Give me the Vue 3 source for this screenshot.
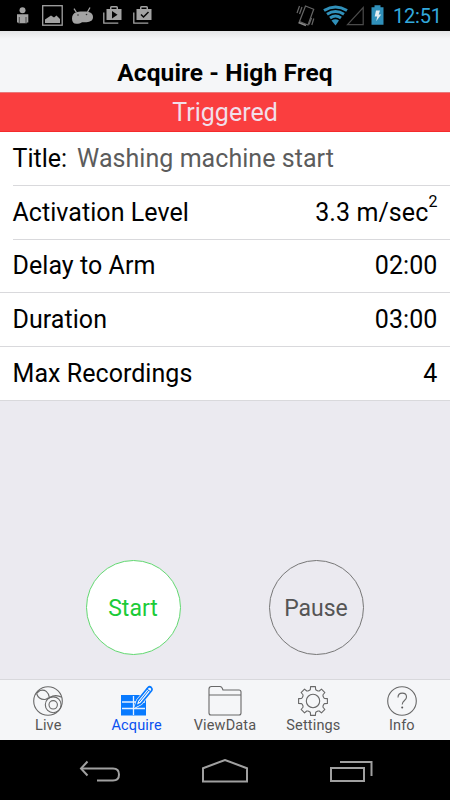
<script setup>
import { ref } from 'vue'

const rows = ref([
  { name: 'Activation Level', value: '3.3 m/sec', sup: '2', inset: true },
  { name: 'Delay to Arm', value: '02:00' },
  { name: 'Duration', value: '03:00' },
  { name: 'Max Recordings', value: '4' }
])
const tabs = ['Live', 'Acquire', 'ViewData', 'Settings', 'Info']
const active = ref('Acquire')
const title = ref('Washing machine start')

// outline of the settings gear: eight teeth around a 32x32 box
function gear() {
  const pts = []
  for (let i = 0; i < 8; i++) {
    const a = i * 45
    for (const [d, r] of [[-18, 11.2], [-13, 11.8], [-9.5, 14.6], [9.5, 14.6], [13, 11.8], [18, 11.2]]) {
      const t = (a + d) * Math.PI / 180
      pts.push((16 + r * Math.sin(t)).toFixed(2) + ' ' + (16 - r * Math.cos(t)).toFixed(2))
    }
  }
  return 'M' + pts.join('L') + 'Z'
}
</script>

<template>
  <div class="screen">
    <div class="status">
      <svg class="left" width="160" height="31" viewBox="0 0 160 31">
        <g fill="#a3a3a3">
          <circle cx="22.5" cy="10.2" r="3" />
          <path d="M17 14.200h11.300v8.300h-1.400v.8h-8.500v-.8H17z" />
          <path d="M45 19.500l6-4 3 2 2.500-2 3.500 3.500v4H45z" />
          <path d="M72 18.500c0-3 1.500-5.500 4.500-6.200 3-.8 5-.8 8-.8 5 0 8.500 1.500 8.500 5.500 0 3.500-2.500 4.500-5 5-2 .5-4 .3-6 .3-1.500 1.200-3.500 1.500-5.500 1.500-3 0-4.500-2-4.500-5.300z" />
          <path d="M76.500 12.500l-2.500-3.800M87.500 12l2.500-4.500" stroke="#a3a3a3" stroke-width="1.300" />
          <path d="M106.500 9h3.500V7.500q0-1.500 1.500-1.500h5q1.500 0 1.500 1.500V9h3.500v11h-15zM111.500 9h5V7.500h-5z" fill-rule="evenodd" />
          <path d="M136.500 9h3.500V7.500q0-1.500 1.500-1.500h5q1.500 0 1.500 1.500V9h3.500v11h-15zM141.500 9h5V7.500h-5z" fill-rule="evenodd" />
        </g>
        <path d="M19.300 17v6M26 17v6" stroke="#333" stroke-width=".8" />
        <g fill="none" stroke="#a3a3a3" stroke-width="1.300">
          <rect x="42.700" y="5.700" width="19.500" height="19.500" />
          <path d="M103.800 12.500v10.700h14.500M133.800 12.500v10.700h14.500" />
        </g>
        <circle cx="78" cy="15" r=".8" fill="#333" />
        <circle cx="86.500" cy="14.500" r=".8" fill="#333" />
        <path d="M112 11v7.500l5.500-3.700z" fill="#050505" />
        <path d="M141 14.500l2.500 2.500 5-5" fill="none" stroke="#050505" stroke-width="1.500" />
      </svg>
      <svg class="right" width="92" height="31" viewBox="295 0 92 31">
        <g fill="none" stroke="#666" stroke-width="1.200">
          <path d="M305.500 6l8.200 3.300-5.700 15.700-8.500-3.500z" />
          <path d="M299.500 6l-2.500 7M302 7l-2.500 7M311.500 18l-2.500 6.500M313.800 18.500l-2 6.500" />
          <path d="M298.500 22.500l7.500 3" stroke="#888" stroke-width="1.800" />
          <path d="M363.200 7.500v17.200h-15.700z" stroke="#4b4b4b" />
        </g>
        <g fill="none" stroke="#3090ba" stroke-width="3">
          <path d="M324 10.500q11.500-7 23 0" />
          <path d="M327 14.200q8.500-5.500 17 0" />
          <path d="M330 18q5.500-4 11 0" />
        </g>
        <path d="M331.500 20.500q4-2.500 7.500 0l-3.500 5z" fill="#3090ba" />
        <path d="M371.500 7.300h3V5.300h6v2h3v17.500h-12z" fill="#3090ba" />
        <path d="M376 10.500h4l-1.300 4h2.500l-5 6.700 1-4.700h-2.500z" fill="#e3edf2" />
      </svg>
      <span class="clock">12:51</span>
    </div>

    <div class="header"><span>Acquire - High Freq</span></div>
    <div class="banner"><span>Triggered</span></div>

    <div class="list">
      <div class="row inset">
        <div class="line">
          <span class="titlelabel">Title:</span>
          <span class="titletext">{{ title }}</span>
        </div>
      </div>
      <div class="row" v-for="row in rows" :key="row.name" :class="{ inset: row.inset }">
        <div class="line">
          <span class="name">{{ row.name }}</span>
          <span class="value">{{ row.value }}<sup v-if="row.sup">{{ row.sup }}</sup></span>
        </div>
      </div>
    </div>

    <div class="actions">
      <button class="round start">Start</button>
      <button class="round pause">Pause</button>
    </div>

    <div class="tabs">
      <div class="tab" v-for="tab in tabs" :key="tab" :class="{ active: tab === active }" @click="active = tab">
        <svg v-if="tab === 'Live'" width="32" height="32" viewBox="0 0 32 32">
          <circle cx="16" cy="16" r="14.300" />
          <circle cx="21.200" cy="19.800" r="7.900" />
          <circle cx="21.200" cy="19.800" r="4.200" />
          <path d="M4.500 8.500c1.500 4 5 6.500 9.500 5.800M8 5.500c5-1.500 8.500 1.500 9.500 7.300M4.500 8.500c1.500-1.500 2-2 3.500-3M14 14.300c1-1 2-1.300 3.500-1.500M17.500 12.800c4-2.800 8-2.800 12.300-.5" />
        </svg>
        <svg v-else-if="tab === 'Acquire'" width="32" height="32" viewBox="0 0 32 32">
          <rect x="0" y="10" width="25" height="20.500" fill="#087aff" stroke="none" />
          <path d="M1 17h23M1 23.500h23M12.500 11v19" stroke="#e5f0ff" stroke-width="1.300" />
          <path d="M14.500 21.500l2-6L27 2.500q1.500-1.500 3.200 0 1.500 1.500.3 3.200L20 18.500z" fill="#f5f6f8" stroke="#f5f6f8" stroke-width="3" />
          <path d="M14.500 21.300l2-5.800L27 2.500q1.500-1.500 3.200 0 1.500 1.500.3 3.200L20 18.500z" fill="#f5f6f8" stroke="#087aff" stroke-width="1.700" />
          <path d="M18.200 17L27.800 5M25.500 3.500l4 3.200" stroke="#087aff" stroke-width="1" />
        </svg>
        <svg v-else-if="tab === 'ViewData'" width="34" height="32" viewBox="0 0 34 32">
          <path d="M1 28V4q0-2.500 2.500-2.500h8.500q2 0 3 3.500h16q2 0 2 2v21q0 2-2 2H3q-2 0-2-2zM1 10h32" />
        </svg>
        <svg v-else-if="tab === 'Settings'" width="32" height="32" viewBox="0 0 32 32">
          <path :d="gear()" stroke-linejoin="round" />
          <circle cx="16" cy="16" r="6.700" />
        </svg>
        <svg v-else width="32" height="32" viewBox="0 0 32 32">
          <circle cx="16" cy="16" r="14.300" />
          <path d="M12 12.500c0-6 8.500-5.500 8.500-.5 0 3.500-4.300 3.500-4.300 7.500" />
          <circle cx="16.200" cy="22.500" r="1" fill="#555" stroke="none" />
        </svg>
        <span>{{ tab }}</span>
      </div>
    </div>

    <div class="nav">
      <svg width="42" height="24" viewBox="0 0 42 24">
        <path d="M2 9.500h32q6 0 6 6t-6 6H18" />
        <path d="M8.500 2.500l-6.500 7 6.500 7" />
      </svg>
      <svg width="46" height="26" viewBox="0 0 46 26">
        <path d="M1 9.200L23 1l22 8.200v13.300H1z" />
      </svg>
      <svg width="44" height="24" viewBox="0 0 44 24">
        <path d="M2 9h33v13H2zM11 3h31.500v14" />
      </svg>
    </div>
  </div>
</template>

<style scoped>
.screen {
  width: 450px;
  height: 800px;
  display: flex;
  flex-direction: column;
  background: #ebeaf0;
  font-family: Roboto, "Liberation Sans", sans-serif;
  color: #000;
  overflow: hidden;
}
.status {
  height: 31px;
  background: #000;
  display: flex;
  flex-shrink: 0;
}
.right {
  margin-left: 135px;
}
.clock {
  margin-left: 6px;
  line-height: 32px;
  font-size: 20px;
  letter-spacing: -0.2px;
  color: #33a9dc;
}
.header {
  height: 61px;
  background: linear-gradient(#e4e5e7, #f5f6f8 8px);
  text-align: center;
  font-size: 24.5px;
  font-weight: 700;
  letter-spacing: 0.1px;
  line-height: 84px;
}
.banner {
  box-sizing: border-box;
  height: 40px;
  background: #fa3e3f;
  border-top: 1px solid #e8797b;
  border-bottom: 1px solid #f42b2c;
  text-align: center;
  color: #f1dfe9;
  font-size: 25px;
  line-height: 39px;
}
.list {
  height: 269px;
  background: #fff;
  display: flex;
  flex-direction: column;
}
.row {
  flex: 1;
  display: flex;
  font-size: 25px;
}
.row .line {
  flex: 1;
  display: flex;
  align-items: center;
  padding: 0 12.5px;
  border-bottom: 1px solid #d9d9dc;
}
.row.inset {
  padding-left: 12.5px;
}
.row.inset .line {
  padding-top: 1px;
  padding-left: 0;
}
.name {
  letter-spacing: 0.05px;
}
.titletext {
  margin-left: 10px;
  letter-spacing: 0.05px;
  color: #5c5c5c;
}
.value {
  margin-left: auto;
  letter-spacing: 0.1px;
}
sup {
  font-size: 16px;
  line-height: 0;
  vertical-align: 14px;
}
.actions {
  flex: 1;
  display: flex;
  align-items: flex-end;
  padding: 0 86.5px 24px 85.5px;
  justify-content: space-between;
}
.round {
  width: 95px;
  height: 95px;
  padding: 1px 0 0;
  border-radius: 50%;
  border: 1px solid #777;
  background: transparent;
  color: #555;
  font: 23px Roboto, sans-serif;
}
.start {
  background: #fff;
  border-color: #62d871;
  color: #1bcb38;
}
.tabs {
  box-sizing: border-box;
  height: 61px;
  background: #f5f6f8;
  border-top: 1px solid #d8d8dc;
  display: flex;
  padding: 5px 4px 0;
}
.tab {
  flex: 1;
  display: flex;
  flex-direction: column;
  align-items: center;
  font-size: 14.5px;
  letter-spacing: 0.15px;
  line-height: 17px;
  color: #555;
}
.tab.active {
  color: #0a50f0;
}
.tab svg {
  fill: none;
  stroke: #686868;
  stroke-width: 1.1;
}
.nav {
  height: 60px;
  background: #000;
  display: flex;
  align-items: flex-start;
  justify-content: space-between;
  box-sizing: border-box;
  padding: 19px 77px 0 79px;
}
.nav svg {
  fill: none;
  stroke: #a0a0a0;
  stroke-width: 2;
}
</style>
<style>
body {
  margin: 0;
}
</style>
